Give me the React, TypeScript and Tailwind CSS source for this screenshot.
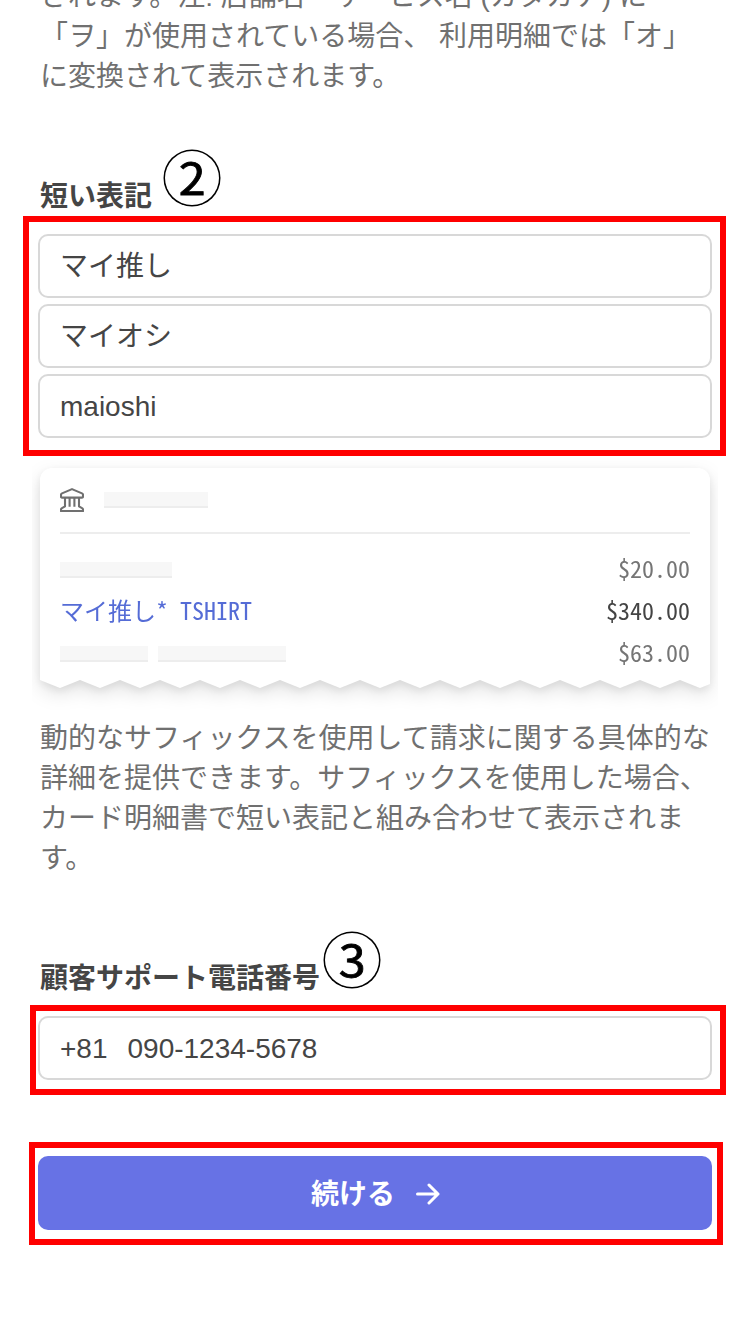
import React from 'react';

const jp = "font-['Liberation_Sans','Noto_Sans_CJK_JP',sans-serif]";
const mono = "font-['Noto_Sans_Mono_CJK_JP','Noto_Sans_CJK_JP',monospace]";

function Step({ n }: { n: number }) {
  return (
    <span className="mt-0.5 ml-0.5 flex h-[54px] w-[54px] shrink-0 items-center justify-center rounded-full pb-[5px] font-['Noto_Sans_CJK_JP',sans-serif] text-[44px] leading-none font-normal text-black ring-[1.5px] ring-black">
      <span className="scale-x-110 [-webkit-text-stroke:0.8px_black]">{n}</span>
    </span>
  );
}

function Field({ children }: { children: React.ReactNode }) {
  return (
    <div className="flex h-16 items-center rounded-[10px] border-2 border-[#d8d8d8] bg-white px-5 pt-0.5 text-[28px] leading-10 whitespace-pre text-[#454545]">
      {children}
    </div>
  );
}

function Bar({ className }: { className: string }) {
  return <span className={`block h-4 border-b-2 border-[#ededed] bg-[#f7f7f7] ${className}`} />;
}

function BankIcon() {
  return (
    <svg width="24" height="24" viewBox="0 0 24 24" fill="none" stroke="#707070" strokeWidth="2.1" strokeLinejoin="round">
      <path d="M12 1.1 22 5.4Q23 5.9 23 6.8V8.6Q23 9.6 22 9.6H2Q1 9.6 1 8.6V6.8Q1 5.9 2 5.4Z" />
      <path d="M5 9.6V18.4L2 20.1Q1 20.7 1 21.5V23H23V21.5Q23 20.7 22 20.1L19 18.4V9.6M9.6 9.6V18.8M14.4 9.6V18.8" />
    </svg>
  );
}

const receiptShape =
  'M0 12A12 12 0 0 1 12 0H658A12 12 0 0 1 670 12V216L660 220L640 212L620 220L600 212L580 220L560 212L540 220L520 212L500 220L480 212L460 220L440 212L420 220L400 212L380 220L360 212L340 220L320 212L300 220L280 212L260 220L240 212L220 220L200 212L180 220L160 212L140 220L120 212L100 220L80 212L60 220L40 212L20 220L0 212Z';

function Receipt() {
  return (
    <div className="mx-8 h-[254px] overflow-hidden px-2 pt-3">
      <div className="[filter:drop-shadow(0_3px_4px_rgba(0,0,0,0.07))_drop-shadow(0_7px_9px_rgba(0,0,0,0.11))]">
        <div className="h-[220px] bg-white px-5" style={{ clipPath: `path('${receiptShape}')` }}>
          <div className="flex h-[66px] items-center gap-5 border-b-2 border-[#ededed]">
            <BankIcon />
            <Bar className="w-[104px]" />
          </div>
          <div className={`flex flex-col pt-[15px] text-2xl leading-[38px] text-[#757575] ${mono}`}>
            <div className="flex h-[42px] items-center justify-between">
              <Bar className="w-28" />
              <span className="pb-1">$20.00</span>
            </div>
            <div className="flex h-[42px] items-center justify-between">
              <span className="pb-1 text-[#556cd6]">マイ推し* TSHIRT</span>
              <span className="pb-1 text-[#444444]">$340.00</span>
            </div>
            <div className="flex h-[42px] items-center justify-between">
              <span className="flex gap-[10px]">
                <Bar className="w-[88px]" />
                <Bar className="w-32" />
              </span>
              <span className="pb-1">$63.00</span>
            </div>
          </div>
        </div>
      </div>
    </div>
  );
}

export default function App() {
  return (
    <main lang="ja" className={`h-[1334px] w-[750px] overflow-hidden bg-white text-[28px] leading-10 text-[#707070] ${jp}`}>
      <p className="-mt-[23px] h-[119px] pl-10 whitespace-nowrap">
        されます。注: 店舗名・サービス名 (カタカナ) に
        <br />
        「ヲ」が使用されている場合、 利用明細では「オ」
        <br />
        に変換されて表示されます。
      </p>
      <div className="mt-[53px] flex h-[67px] items-start pl-10">
        <h2 className="mt-[28px] w-[123px] font-bold text-[#454545]">短い表記</h2>
        <Step n={2} />
      </div>
      <section className="mr-6 ml-[23px] flex h-60 flex-col gap-1.5 border-6 border-[#ff0000] pt-3 pr-2 pl-[9px]">
        <Field>マイ推し</Field>
        <Field>マイオシ</Field>
        <Field>maioshi</Field>
      </section>
      <Receipt />
      <p className="mt-[9px] h-[159px] pl-10 whitespace-nowrap">
        動的なサフィックスを使用して請求に関する具体的な
        <br />
        詳細を提供できます。サフィックスを使用した場合、
        <br />
        カード明細書で短い表記と組み合わせて表示されま
        <br />
        す。
      </p>
      <div className="mt-[53px] flex h-[74px] items-start pl-10">
        <h2 className="mt-[28px] w-[283px] font-bold whitespace-nowrap text-[#454545]">顧客サポート電話番号</h2>
        <Step n={3} />
      </div>
      <section className="mr-6 ml-[30px] h-[90px] border-6 border-[#ff0000] pt-[5px] pr-2 pl-0.5">
        <Field>
          <span className="mr-5">+81</span>
          <span>090-1234-5678</span>
        </Field>
      </section>
      <section className="mt-[47px] mr-[27px] ml-[29px] h-[103px] border-6 border-[#ff0000] pt-2 pr-[5px] pl-[3px]">
        <button className="flex h-[74px] w-full items-center justify-center rounded-[10px] bg-[#6772e5] pt-0.5 pl-px font-bold text-white">
          <span className="pt-0.5">続ける</span>
          <svg className="ml-[21px]" width="24" height="24" viewBox="0 0 24 24" fill="none" stroke="white" strokeWidth="3" strokeLinecap="round" strokeLinejoin="round">
            <path d="M1.5 12H22M13 3L22 12L13 21" />
          </svg>
        </button>
      </section>
    </main>
  );
}
